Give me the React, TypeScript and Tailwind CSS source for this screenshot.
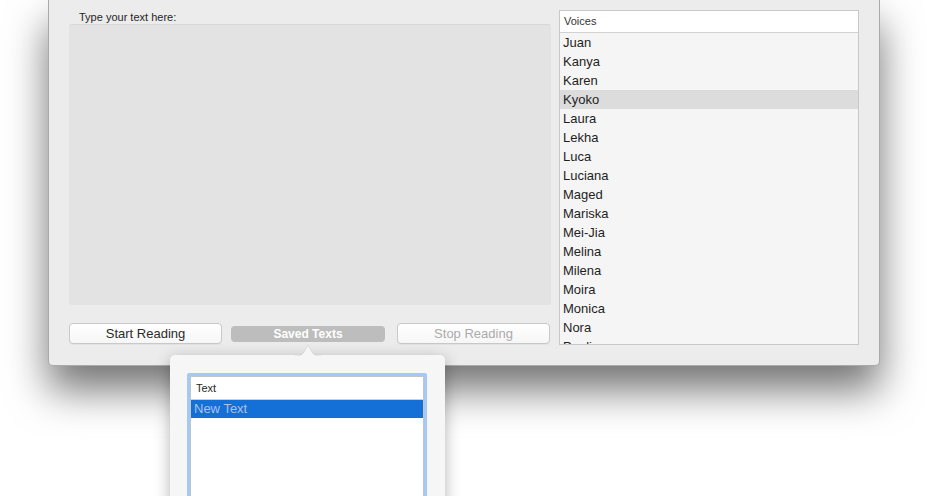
const voices = [
  'Juan',
  'Kanya',
  'Karen',
  'Kyoko',
  'Laura',
  'Lekha',
  'Luca',
  'Luciana',
  'Maged',
  'Mariska',
  'Mei-Jia',
  'Melina',
  'Milena',
  'Moira',
  'Monica',
  'Nora',
  'Paulina',
]

function PushButton({ label, disabled }: { label: string; disabled?: boolean }) {
  return (
    <button
      className={
        'h-[21px] w-[153px] shrink-0 rounded-[4px] border border-[#c8c8c8] bg-gradient-to-b from-[#ffffff] to-[#f6f6f6] text-[13px] leading-[19px] shadow-[0_1px_0_rgba(0,0,0,0.04)] ' +
        (disabled ? 'text-[#ababab]' : 'text-[#2b2b2b]')
      }
    >
      {label}
    </button>
  )
}

export default function App() {
  return (
    <div
      className="relative h-[496px] w-[927px] overflow-hidden bg-white"
      style={{ fontFamily: '"Liberation Sans", Arial, sans-serif' }}
    >
      {/* main window */}
      <div className="ml-[48px] flex h-[366px] w-[832px] gap-[8px] rounded-b-[5px] border-x border-b border-[#a9a9a9] bg-[#ececec] pl-[20px] pr-[20px] pt-[10px] shadow-[0_24px_40px_rgba(0,0,0,0.55)]">
        <div className="flex w-[482px] flex-col">
          <div className="h-[14px] pl-[10px] text-[11px] leading-[14px] text-[#262626]">Type your text here:</div>
          <div className="h-[281px] rounded-[3px] border-t border-[#d8d8d8] bg-[#e3e3e3]" />
          <div className="mt-[18px] flex items-center">
            <PushButton label="Start Reading" />
            <div className="ml-[9px] flex h-[16px] w-[154px] shrink-0 items-center justify-center rounded-[4px] bg-[#bdbdbd] text-[12px] font-bold text-white">
              Saved Texts
            </div>
            <div className="ml-[12px] flex">
              <PushButton label="Stop Reading" disabled />
            </div>
          </div>
        </div>

        <div className="flex h-[335px] w-[300px] flex-col overflow-hidden border border-[#c8c8c8] bg-[#f5f5f5]">
          <div className="h-[22px] shrink-0 border-b border-[#d2d2d2] bg-white pl-[4px] text-[11px] leading-[21px] text-[#333]">
            Voices
          </div>
          {voices.map((v) => (
            <div
              key={v}
              className={
                'h-[19px] shrink-0 pl-[3px] text-[13px] leading-[19px] text-[#1e1e1e] ' +
                (v === 'Kyoko' ? 'bg-[#dcdcdc]' : '')
              }
            >
              {v}
            </div>
          ))}
        </div>
      </div>

      {/* saved texts popover */}
      <div className="absolute left-[170px] top-[355px] h-[160px] w-[275px] rounded-[5px] bg-[#f6f6f6] shadow-[0_4px_16px_rgba(0,0,0,0.3)]">
        <svg className="absolute -top-[11px] left-[124px]" width="28" height="12" viewBox="0 0 28 12">
          <path d="M0 12 C6 12 8 11 10 8 L14 1 L18 8 C20 11 22 12 28 12 Z" fill="#f6f6f6" />
          <path d="M0 12 C6 12 8 11 10 8 L14 1 L18 8 C20 11 22 12 28 12" fill="none" stroke="rgba(0,0,0,0.08)" />
        </svg>
        <div className="ml-[17px] mt-[18px] w-[240px] rounded-[2px] border-[3px] border-[#a4c9f4] bg-white">
          <div className="border border-[#c4c4c4] border-b-0">
            <div className="h-[23px] border-b border-[#cfcfcf] pl-[5px] text-[11px] leading-[22px] text-[#2a2a2a]">Text</div>
            <div className="h-[18px] bg-[#1470d6] pl-[3px] text-[13px] leading-[18px] text-[#aec0e4]">New Text</div>
            <div className="h-[120px] bg-white" />
          </div>
        </div>
      </div>
    </div>
  )
}
